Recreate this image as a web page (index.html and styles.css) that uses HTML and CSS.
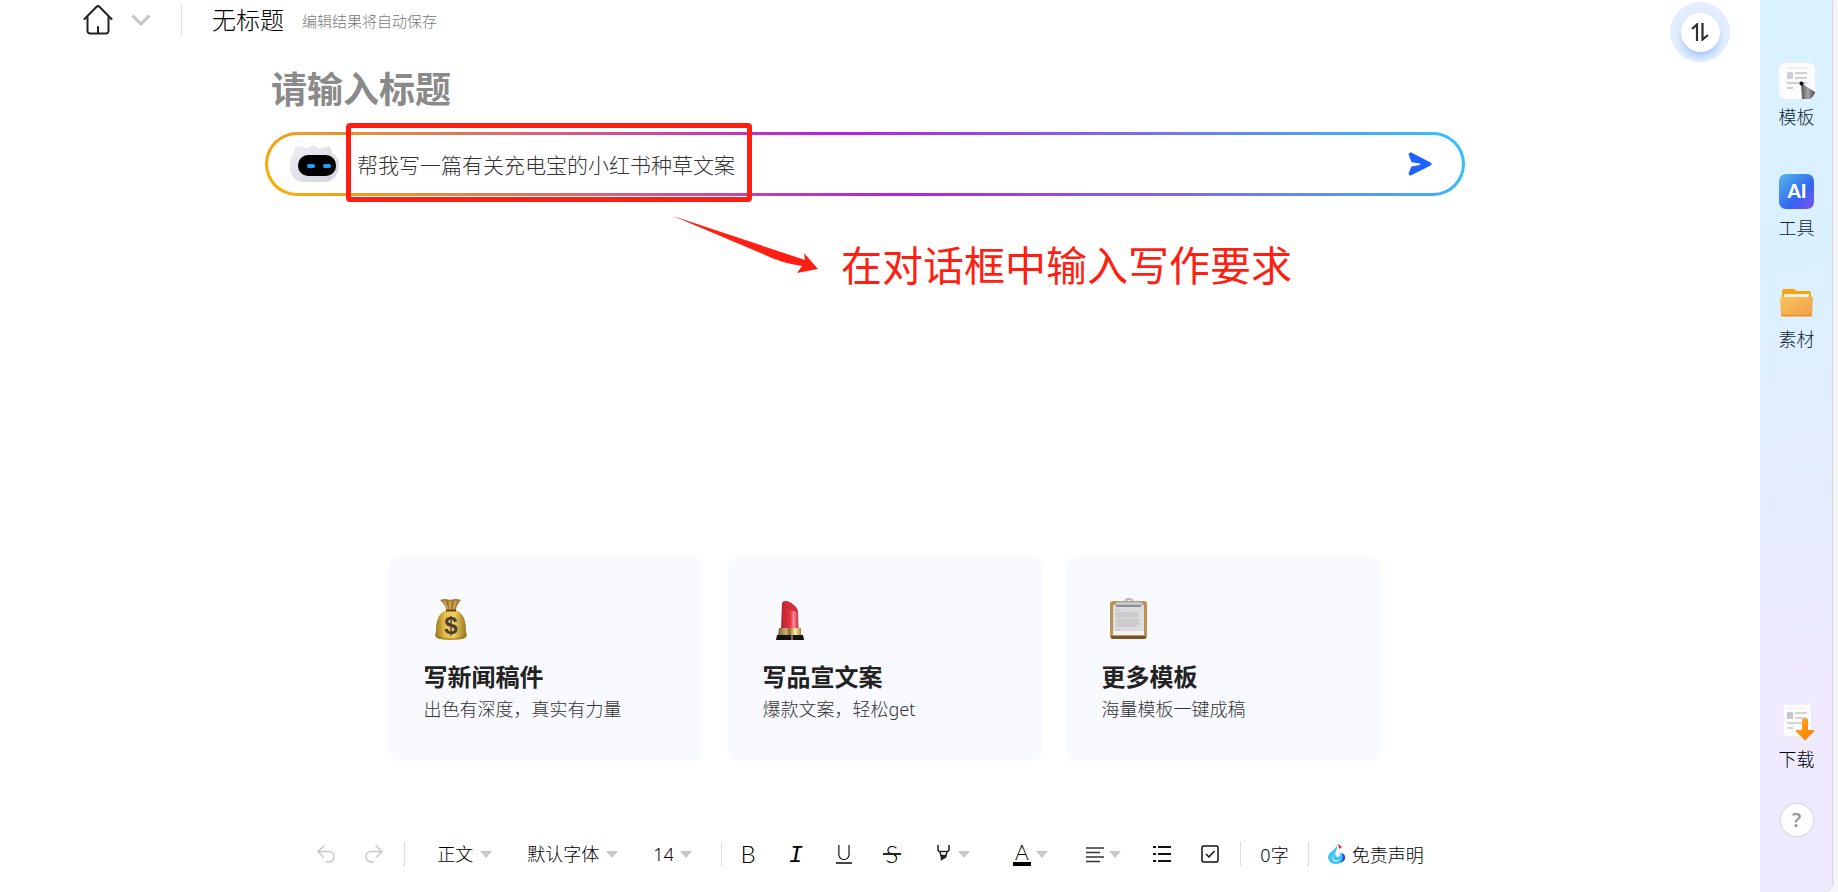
FILE: index.html
```html
<!DOCTYPE html>
<html lang="zh-CN">
<head>
    <meta charset="UTF-8">
    <meta name="viewport" content="width=device-width, initial-scale=1.0">
    <title>无标题</title>
    <link rel="stylesheet" href="styles.css">
</head>
<body>

<main class="editor">
    <header class="topbar">
        <a class="home" href="#" aria-label="首页">
            <svg width="30" height="30" viewBox="0 0 30 30" fill="none" stroke="#222" stroke-width="2" stroke-linecap="round" stroke-linejoin="round">
                <path d="M1.5 14 13.6 1.8a2 2 0 0 1 2.8 0L28.5 14"/>
                <path d="M4.5 12v14a2.5 2.5 0 0 0 2.5 2.5h16a2.5 2.5 0 0 0 2.5-2.5V12M15 22v6"/>
            </svg>
        </a>
        <button class="chevron" aria-label="展开">
            <svg width="20" height="12" viewBox="0 0 20 12" fill="none" stroke="#c4c4c4" stroke-width="3"><path d="M1.5 1.500 10 10l8.500-8.500"/></svg>
        </button>
        <span class="divider"></span>
        <h1 class="doc-name">无标题</h1>
        <span class="save-hint">编辑结果将自动保存</span>
    </header>

    <section class="document">
        <input class="doc-title" type="text" placeholder="请输入标题" aria-label="标题">
        <form class="prompt">
            <svg class="robot" width="50" height="38" viewBox="0 0 50 38">
                <defs>
                    <linearGradient id="head" x1="0" y1="0" x2="1" y2="1">
                        <stop offset="0" stop-color="#eeeef2"/>
                        <stop offset="1" stop-color="#d3d3dc"/>
                    </linearGradient>
                </defs>
                <path d="M6 3Q7 0 11 1.500L18 3.500 22 1q3-1.500 5 .5l3 2.500 8-2.500q3-.7 4 2l1.500 5Q50 13 50 20c0 11-7 17-16 17H15C5 37 0 29 1 19 1 14 3 10 4.500 8z" fill="url(#head)"/>
                <rect x="9" y="10" width="38" height="21" rx="10" fill="#000"/>
                <rect x="18" y="19" width="8" height="4" rx="2" fill="#1ba3ff"/>
                <rect x="34" y="19" width="8" height="4" rx="2" fill="#1ba3ff"/>
            </svg>
            <input class="prompt-input" type="text" value="帮我写一篇有关充电宝的小红书种草文案" aria-label="写作要求">
            <button class="send" type="button" aria-label="发送">
                <svg width="24" height="24" viewBox="0 0 24 24" fill="#1e62ff"><path d="M3.300.6 22.600 10.600q2 1.400 0 2.800L3.300 23.300Q.3 24 .8 20.800L3.500 14.500 12 13v-1.500L3.500 10.200.8 3.200Q.3 0 3.300.6z"/></svg>
            </button>
            <!-- annotation layer -->
            <span class="mark-box"></span>
            <svg class="mark-arrow" width="146" height="57" viewBox="0 0 146 57" fill="#ff1f12"><path d="M0 0 132 44 131 37 145 53 124 57 129 50 Q108 47 90 38Z"/></svg>
            <span class="mark-text">在对话框中输入写作要求</span>
        </form>
    </section>

    <section class="cards">
        <a class="card" href="#">
            <svg class="card-icon" viewBox="0 0 54 54">
                <defs>
                    <linearGradient id="bag" x1="0" x2="1">
                        <stop offset="0" stop-color="#9c741c"/>
                        <stop offset=".3" stop-color="#e3bf4c"/>
                        <stop offset=".6" stop-color="#efd05f"/>
                        <stop offset="1" stop-color="#97701c"/>
                    </linearGradient>
                </defs>
                <path d="M16 7q5-2 10 0 6-2 11 0-4 4-5.500 11h-9Q21 11 16 7z" fill="#a87b35"/>
                <path d="M20 8l4 9M26 8v9M32 8l-3 9" stroke="#d6ad60" stroke-width="1.5"/>
                <path d="M22 17h10c9 4 10 13 10 22 2 4 0 6-4 7q-11 2-22 0c-4-1-6-3-4-7 0-9 1-18 10-22z" fill="url(#bag)"/>
                <path d="M12 41q3 4 15 4t15-4q1 4-4 5-11 2-22 0-5-1-4-5z" fill="#8f651c" opacity=".5"/>
                <path d="M22 17.500h10" stroke="#6b4718" stroke-width="2"/>
                <text x="27" y="41" text-anchor="middle" class="dollar">$</text>
            </svg>
            <h2>写新闻稿件</h2>
            <p>出色有深度，真实有力量</p>
        </a>
        <a class="card" href="#">
            <svg class="card-icon" viewBox="0 0 54 54">
                <defs>
                    <linearGradient id="red" x1="0" x2="1">
                        <stop offset="0" stop-color="#b81e2c"/>
                        <stop offset=".55" stop-color="#e13845"/>
                        <stop offset=".72" stop-color="#ff8c94"/>
                        <stop offset="1" stop-color="#c92636"/>
                    </linearGradient>
                    <linearGradient id="gold" x1="0" x2="1">
                        <stop offset="0" stop-color="#7b5f2c"/>
                        <stop offset=".35" stop-color="#c9b279"/>
                        <stop offset=".5" stop-color="#8b6a2d"/>
                        <stop offset=".75" stop-color="#fff2b0"/>
                        <stop offset="1" stop-color="#a98436"/>
                    </linearGradient>
                </defs>
                <path d="M19 10q2-3 7-1 7 3 9 9l.5 18H18z" fill="url(#red)"/>
                <path d="M20 9q4-2 9 2 5 4 5 7-4 1-9-3-4-3-5-6z" fill="#d92f3d" stroke="#b02432" stroke-width=".6"/>
                <path d="M16 35h22v7H15z" fill="url(#gold)"/>
                <path d="M14 42h26l1 5H13z" fill="#15120f"/>
                <path d="M29 42v5" stroke="#ccc" stroke-width="1"/>
            </svg>
            <h2>写品宣文案</h2>
            <p>爆款文案，轻松get</p>
        </a>
        <a class="card" href="#">
            <svg class="card-icon" viewBox="0 0 54 54">
                <rect x="8" y="8" width="37" height="38" rx="3" fill="#bd9151"/>
                <path d="M9 43h35v1q0 2-2 2H11q-2 0-2-2z" fill="#7a532b"/>
                <path d="M11 12h31v30H11z" fill="#dcdcde"/>
                <path d="M11 38h31v4H11z" fill="#f3f3f4"/>
                <path d="M14 17h5M14 20h22M14 22h23M14 24h22M14 27h24M14 29h23M14 31h24M14 33h20M14 37h4" stroke="#bbb" stroke-width="1"/>
                <path d="M13 13q0-4 3-4h22q3 0 3 4z" fill="#c3c8cd"/>
                <path d="M14 13h25" stroke="#777" stroke-width="1.5"/>
                <path d="M23 10q0-4 4-4t4 4" fill="none" stroke="#a9b7c6" stroke-width="2"/>
            </svg>
            <h2>更多模板</h2>
            <p>海量模板一键成稿</p>
        </a>
    </section>

    <footer class="toolbar">
        <button class="tool" aria-label="撤销">
            <svg width="18" height="18" viewBox="0 0 18 18" fill="none" stroke="#c8c8c8" stroke-width="1.5"><path d="M7.500.5 1 6.500l6 6M1 6.500h11c3 0 5 2.300 5 5s-2 5.500-5 5.500H9"/></svg>
        </button>
        <button class="tool" aria-label="重做">
            <svg width="18" height="18" viewBox="0 0 18 18" fill="none" stroke="#c8c8c8" stroke-width="1.5"><path d="M10.500.5 17 6.500l-6 6M17 6.500H6c-3 0-5 2.300-5 5S3 17 6 17h3"/></svg>
        </button>
        <span class="bar bar-undo"></span>
        <label class="pick"><select class="style" aria-label="段落样式"><option>正文</option></select><i class="caret"></i></label>
        <label class="pick"><select class="family" aria-label="字体"><option>默认字体</option></select><i class="caret"></i></label>
        <label class="pick"><select class="size" aria-label="字号"><option>14</option></select><i class="caret"></i></label>
        <span class="bar bar-pick"></span>
        <button class="tool" aria-label="加粗">
            <svg width="24" height="36" viewBox="0 0 24 36"><text class="glyph" x="12" y="27" text-anchor="middle">B</text></svg>
        </button>
        <button class="tool" aria-label="斜体">
            <svg width="24" height="36" viewBox="0 0 24 36"><text class="glyph glyph-italic" x="12" y="26" text-anchor="middle">I</text></svg>
        </button>
        <button class="tool" aria-label="下划线">
            <svg width="24" height="36" viewBox="0 0 24 36"><text class="glyph glyph-small" x="12" y="24" text-anchor="middle">U</text><path d="M4 27h16" stroke="#444" stroke-width="2"/></svg>
        </button>
        <button class="tool" aria-label="删除线">
            <svg width="24" height="36" viewBox="0 0 24 36"><text class="glyph" x="12" y="27" text-anchor="middle">S</text><path d="M3 18h18" stroke="#222" stroke-width="2"/></svg>
        </button>
        <button class="tool-drop highlight" aria-label="突出显示">
            <svg width="18" height="18" viewBox="0 0 18 18" fill="none" stroke="#222" stroke-width="1.5"><path d="M3 0v4.500q0 2 2 2h7q2 0 2-2V0M5 7l1 4h5l1-4"/><path d="M6.500 10.500v4l4-2.500v-1.500z" fill="#222"/></svg>
            <i class="caret"></i>
        </button>
        <button class="tool-drop color" aria-label="文字颜色">
            <svg width="18" height="36" viewBox="0 0 18 36"><text class="glyph glyph-small" x="9" y="24" text-anchor="middle">A</text><path d="M0 28h18" stroke="#000" stroke-width="4"/></svg>
            <i class="caret"></i>
        </button>
        <button class="tool-drop align" aria-label="对齐">
            <svg width="18" height="18" viewBox="0 0 18 18" stroke="#333" stroke-width="1.6"><path d="M0 3h18M0 7.500h14M0 12h18M0 16.500h14"/></svg>
            <i class="caret"></i>
        </button>
        <button class="tool" aria-label="列表">
            <svg width="18" height="18" viewBox="0 0 18 18" stroke="#111" stroke-width="2"><path d="M0 2h3M0 9h3M0 16h3M5 2h13M5 9h13M5 16h13"/></svg>
        </button>
        <button class="tool" aria-label="待办">
            <svg width="18" height="18" viewBox="0 0 18 18" fill="none" stroke="#111" stroke-width="1.5"><rect x="1" y="1" width="16" height="16" rx="1.5"/><path d="M5 9l3 3 5.500-6"/></svg>
        </button>
        <span class="bar bar-side"></span>
        <span class="count">0字</span>
        <span class="bar"></span>
        <a class="legal" href="#">
            <svg width="18" height="22" viewBox="0 0 18 22">
                <path d="M14 10q4 2 3 6-2 4-7 4z" fill="#1d4fd8"/>
                <path d="M8.500 2q1.500 3-.5 6-1.500 3 0 5 1.500 1.500 3 .5 1.500-1.500.5-4.500 3.500 2 3 6Q13.500 21 8 21 1 20.500 0 14.500 0 11 4 8 8 5.500 8.500 2z" fill="#3dc3fc"/>
                <path d="M6 11q-2 4 .5 6 3 1.500 5-1-1 3-4.500 2.500Q4 17.500 4.500 14 5 12 6 11z" fill="#fff"/>
                <path d="M10 1l4 3-3 2z" fill="#f31d22"/>
            </svg>
            免责声明
        </a>
    </footer>

    <button class="switch" aria-label="切换">
        <span class="switch-inner">
            <svg width="18" height="18" viewBox="0 0 18 18" fill="none" stroke="#2c2c2c" stroke-width="2.2"><path d="M1 6l5-4.500V18M11.500 0v16.500L17 12"/></svg>
        </span>
    </button>
</main>

<aside class="sidebar">
    <nav class="side-nav">
        <a class="side-item" href="#">
            <svg width="36" height="36" viewBox="0 0 36 36">
                <defs>
                    <linearGradient id="pen" x1="0" x2="1">
                        <stop offset="0" stop-color="#555"/>
                        <stop offset=".5" stop-color="#a5a5a5"/>
                        <stop offset="1" stop-color="#4a4a4a"/>
                    </linearGradient>
                </defs>
                <rect width="36" height="36" rx="6" fill="#fcfcfd"/>
                <path d="M8 5h20" stroke="#e3e3ea"/>
                <rect x="8" y="9" width="6" height="7" rx="1" fill="#cfcfd8"/>
                <path d="M16 10h12M16 15h12M8 20h20M8 25h6" stroke="#cfcfd8" stroke-width="2"/>
                <path d="M22 20 36 29q-1 5-5 7h-8z" fill="url(#pen)"/>
                <circle cx="22.5" cy="20.5" r="2" fill="#000"/>
            </svg>
            模板
        </a>
        <a class="side-item" href="#">
            <svg width="36" height="36" viewBox="0 0 36 36">
                <defs>
                    <linearGradient id="ai" x1="0" y1="0" x2="1" y2="1">
                        <stop offset="0" stop-color="#55b9e9"/>
                        <stop offset=".6" stop-color="#3466f2"/>
                        <stop offset="1" stop-color="#8450ee"/>
                    </linearGradient>
                </defs>
                <rect width="35" height="35" rx="7" fill="url(#ai)"/>
                <text class="ai-text" x="18" y="24" text-anchor="middle">AI</text>
            </svg>
            工具
        </a>
        <a class="side-item" href="#">
            <svg width="36" height="36" viewBox="0 0 36 36">
                <defs>
                    <linearGradient id="folder" x1="0" x2="1" y2="1">
                        <stop offset="0" stop-color="#fcc25b"/>
                        <stop offset="1" stop-color="#eea04b"/>
                    </linearGradient>
                </defs>
                <path d="M3 6q0-2 2-2h10l3 2h12q2 0 2 2v8H3z" fill="#f3a60f"/>
                <path d="M5 9h25v6H5z" fill="#eef0ea"/>
                <path d="M1 12h33l-1 18q0 1.500-2 1.500H4q-2 0-2-1.500z" fill="url(#folder)"/>
                <path d="M2 30.500h31" stroke="#ec9320" stroke-width="1.5"/>
            </svg>
            素材
        </a>
    </nav>
    <a class="side-item download" href="#">
        <svg width="36" height="38" viewBox="0 0 36 38">
            <defs>
                <linearGradient id="arrow" x2="1" y2="1">
                    <stop offset="0" stop-color="#ffab1f"/>
                    <stop offset="1" stop-color="#ff7a00"/>
                </linearGradient>
            </defs>
            <rect x="4" y="1" width="29" height="33" rx="1" fill="#fcfcfd" stroke="#e6e5ef"/>
            <path d="M8 5h20" stroke="#ececf2"/>
            <rect x="8" y="9" width="6" height="7" fill="#c8c8cc"/>
            <path d="M16 10h12M16 15h12M8 20h18M8 25h6" stroke="#d3d3d8" stroke-width="2"/>
            <path d="M23 17q0-1.500 1.500-1.500h3Q29 15.500 29 17v10h5.500q1.500 0 .5 1.500l-8 8q-1 1-2 0l-8-8q-1-1.500.5-1.500H23z" fill="url(#arrow)"/>
        </svg>
        下载
    </a>
    <button class="help" aria-label="帮助">?</button>
</aside>

</body>
</html>
```

FILE: styles.css
```css
* {
    box-sizing: border-box;
}

body {
    margin: 0;
    min-height: 100vh;
    display: flex;
    padding-right: 6px;
    background: #f6f6f6;
    font-family: "Noto Sans", "Noto Sans CJK SC", sans-serif;
    font-size: 18px;
    font-weight: 300;
    color: #000;
}

button, input, select {
    font: inherit;
    color: inherit;
    border: none;
    background: none;
    padding: 0;
    margin: 0;
    outline: none;
}

button {
    cursor: pointer;
}

a {
    color: inherit;
    text-decoration: none;
}

svg {
    display: block;
    flex-shrink: 0;
}

/* editor */
.editor {
    flex: 1;
    position: relative;
    display: flex;
    flex-direction: column;
    background: #fff;
}

.topbar {
    display: flex;
    align-items: center;
    height: 42px;
    padding: 0 0 2px 83px;
}

.home {
    margin-right: 18px;
}

.divider {
    width: 1px;
    height: 30px;
    margin: 0 30px;
    background: #e2e2e2;
}

.doc-name {
    margin: 0 18px 0 0;
    font-size: 24px;
    line-height: 40px;
    font-weight: 300;
}

.save-hint {
    font-size: 15px;
    color: #777;
}

.document {
    width: 1200px;
    max-width: 90%;
    margin-top: 20px;
    margin-right: 30px;
    align-self: center;
}

.doc-title {
    display: block;
    width: 100%;
    height: 54px;
    padding-left: 6px;
    font-size: 36px;
    font-weight: 700;
}

.doc-title::placeholder {
    color: #8a8a8a;
}

.prompt {
    position: relative;
    display: flex;
    align-items: center;
    height: 64px;
    margin-top: 16px;
    padding: 0 30px 0 21px;
    border: 3px solid transparent;
    border-radius: 32px;
    background: linear-gradient(#fff, #fff) padding-box,
                linear-gradient(45deg, #f9b200, #b91fe0 50%, #30c5ff) border-box;
}

.prompt-input {
    flex: 1;
    height: 40px;
    margin-left: 18px;
    font-size: 21px;
    color: #333;
}

/* annotation layer */
.mark-box {
    position: absolute;
    left: 78px;
    top: -12px;
    width: 406px;
    height: 79px;
    border: 5px solid #ff1f12;
    border-radius: 4px;
    pointer-events: none;
}

.mark-arrow {
    position: absolute;
    left: 405px;
    top: 81px;
}

.mark-text {
    position: absolute;
    left: 573px;
    top: 100px;
    font-size: 41px;
    line-height: 60px;
    font-weight: 400;
    white-space: nowrap;
    color: #ff1f12;
}

/* cards */
.cards {
    display: grid;
    grid-template-columns: repeat(3, 1fr);
    gap: 24px;
    width: 993px;
    max-width: 90%;
    margin-top: auto;
    margin-left: 8px;
    align-self: center;
}

.card {
    padding: 37px 36px 38px;
    border-radius: 12px;
    background: #f9faff;
}

.card-icon {
    width: 54px;
    height: 54px;
}

.card h2 {
    margin: 12px 0 0;
    font-size: 24px;
    line-height: 36px;
    font-weight: 700;
    color: #222;
}

.card p {
    margin: 0;
    line-height: 28px;
    color: #333;
}

.dollar {
    font: 700 24px "Liberation Sans", sans-serif;
    fill: #4a3b36;
}

/* toolbar */
.toolbar {
    display: flex;
    align-items: center;
    justify-content: center;
    height: 36px;
    margin: 75px 34px 20px 0;
}

.tool {
    display: flex;
    justify-content: center;
    width: 48px;
}

.bar {
    width: 1px;
    height: 24px;
    background: #ddd;
}

.bar-undo {
    margin: 0 32px 0 6px;
}

.bar-pick {
    margin-right: 2px;
    margin-left: -6px;
}

.bar-side {
    margin-left: 6px;
}

.pick {
    display: flex;
    align-items: center;
    gap: 7px;
    margin-right: 35px;
}

.pick select {
    appearance: none;
    height: 30px;
}

.style {
    width: 36px;
}

.family {
    width: 72px;
}

.size {
    width: 20px;
}

.caret {
    border: 6px solid transparent;
    border-top: 7px solid #c8c8c8;
    border-bottom: none;
    pointer-events: none;
}

.tool-drop {
    display: flex;
    align-items: center;
    gap: 5px;
}

.highlight {
    margin-left: 19px;
}

.color {
    margin-left: 43px;
}

.align {
    margin: 0 17px 0 38px;
}

.glyph {
    font: 300 24px Lato, sans-serif;
    fill: #000;
}

.glyph-italic {
    font: italic 400 24px "Liberation Mono", monospace;
}

.glyph-small {
    font-size: 21px;
}

.count {
    margin: 0 19px;
}

.legal {
    display: flex;
    align-items: center;
    gap: 6px;
    margin-left: 19px;
}

/* floating switch */
.switch {
    position: absolute;
    top: 2px;
    right: 30px;
    display: grid;
    place-items: center;
    width: 60px;
    height: 60px;
    border-radius: 50%;
    background: #e3edff;
}

.switch-inner {
    display: grid;
    place-items: center;
    width: 39px;
    height: 39px;
    border-radius: 50%;
    background: #fff;
    box-shadow: 0 5px 7px -1px #9cc2ff;
}

/* sidebar */
.sidebar {
    display: flex;
    flex-direction: column;
    align-items: center;
    width: 72px;
    padding: 63px 0 56px 1px;
    border-radius: 0 0 10px 0;
    background: linear-gradient(170deg, #daf1ff 0%, #dbf0ff 30%, #e3edff 50%, #efeaff 75%, #efeaff 100%);
    box-shadow: 1px 0 2px rgba(0, 0, 0, 0.15);
}

.side-nav {
    display: flex;
    flex-direction: column;
    gap: 45px;
}

.side-item {
    display: flex;
    flex-direction: column;
    align-items: center;
    gap: 6px;
    line-height: 24px;
    color: #0c1f33;
}

.download {
    margin-top: auto;
    color: #000;
}

.help {
    width: 32px;
    height: 32px;
    margin-top: 33px;
    border-radius: 50%;
    background: #fff;
    box-shadow: 0 0 3px rgba(0, 0, 0, 0.2);
    font-size: 20px;
    font-weight: 600;
    line-height: 32px;
    color: #999;
}

.ai-text {
    font: 900 19px Lato, sans-serif;
    fill: #fff;
}
```
